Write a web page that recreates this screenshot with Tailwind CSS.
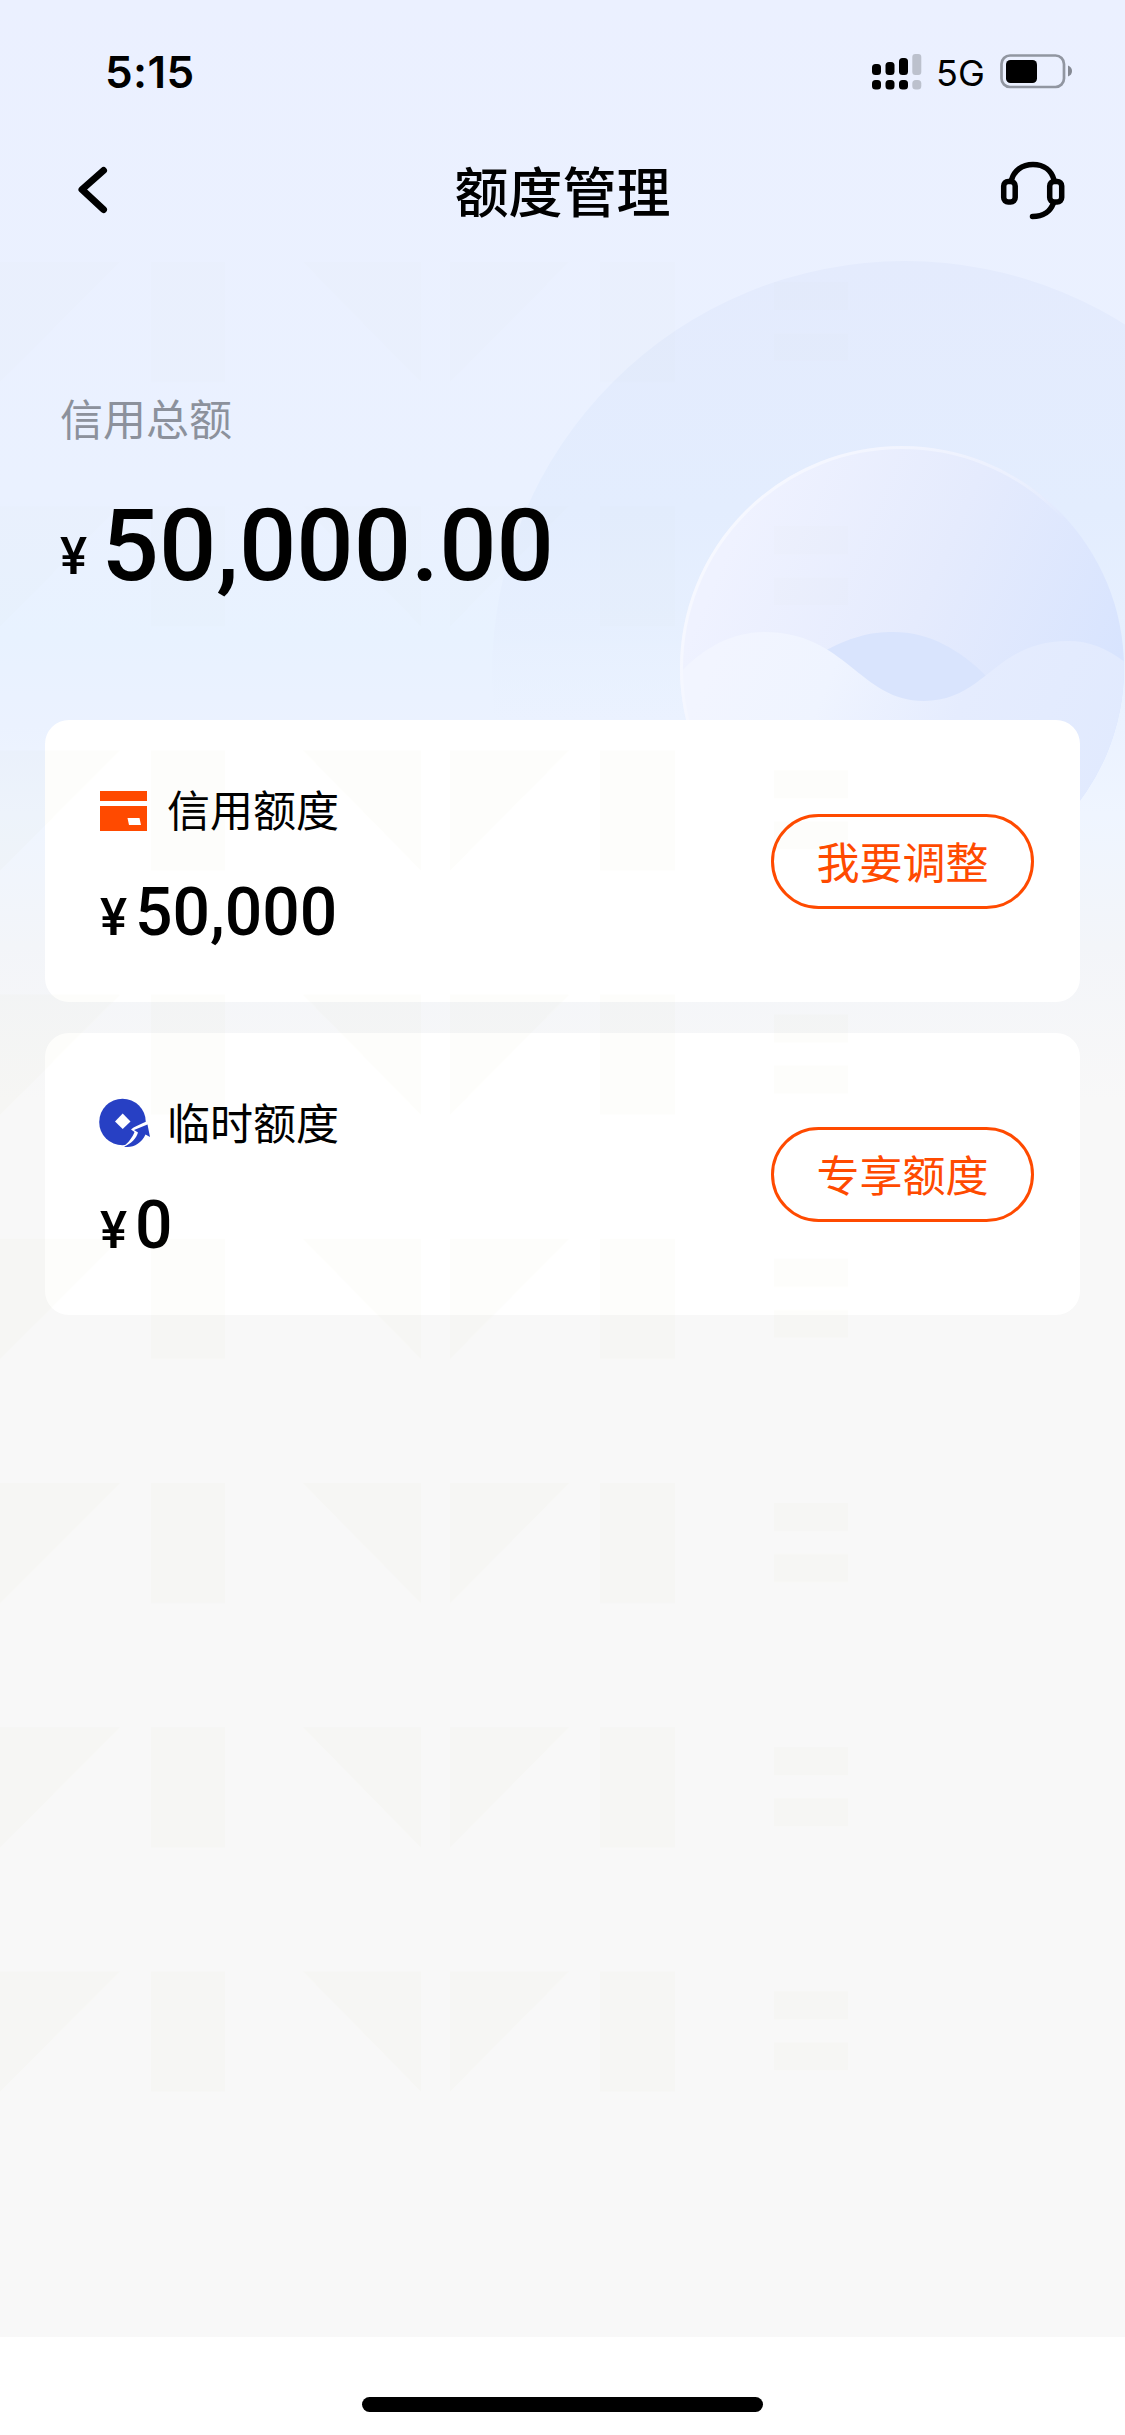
<!DOCTYPE html>
<html lang="zh-CN">
<head>
<meta charset="utf-8">
<title>额度管理</title>
<script src="https://cdn.jsdelivr.net/npm/@tailwindcss/browser@4"></script>
</head>
<body class="bg-white">
<div class="relative flex h-[2435px] w-[1125px] flex-col overflow-hidden bg-[#f8f8f8] font-['Noto_Sans_CJK_SC',sans-serif] whitespace-nowrap text-black">
  <!-- header artwork -->
  <svg class="absolute top-0 left-0" width="1125" height="1100" viewBox="0 0 1125 1100" fill="none" aria-hidden="true">
    <defs>
      <linearGradient id="sky" x1="0" y1="0" x2="0" y2="1100" gradientUnits="userSpaceOnUse">
        <stop offset="0" stop-color="#ebf0ff"/><stop offset=".45" stop-color="#eaf1ff"/><stop offset=".58" stop-color="#e8f2ff"/><stop offset=".66" stop-color="#ebf2ff"/><stop offset=".74" stop-color="#eff5ff"/><stop offset=".86" stop-color="#f3f5f9"/><stop offset="1" stop-color="#f8f8f8"/>
      </linearGradient>
      <linearGradient id="halo" x1="0" y1="261" x2="0" y2="760" gradientUnits="userSpaceOnUse">
        <stop offset="0" stop-color="#e4ebfd"/><stop offset=".5" stop-color="#e3edfe"/><stop offset=".75" stop-color="#e6effe" stop-opacity=".8"/><stop offset="1" stop-color="#ecf3ff" stop-opacity="0"/>
      </linearGradient>
      <linearGradient id="ball" x1="740" y1="520" x2="1110" y2="680" gradientUnits="userSpaceOnUse">
        <stop offset="0" stop-color="#eff2ff"/><stop offset=".5" stop-color="#e5ebfd"/><stop offset="1" stop-color="#d8e4fe"/>
      </linearGradient>
      <linearGradient id="rim" x1="740" y1="500" x2="1000" y2="640" gradientUnits="userSpaceOnUse">
        <stop offset="0" stop-color="#f6f8ff"/><stop offset=".7" stop-color="#f2f5ff" stop-opacity=".6"/><stop offset="1" stop-color="#fff" stop-opacity="0"/>
      </linearGradient>
      <linearGradient id="wave" x1="720" y1="640" x2="1100" y2="800" gradientUnits="userSpaceOnUse">
        <stop offset="0" stop-color="#f2f5ff"/><stop offset=".28" stop-color="#eff4ff"/><stop offset=".6" stop-color="#e5ecfe"/><stop offset="1" stop-color="#e1eafe"/>
      </linearGradient>
      <clipPath id="disc"><circle cx="902" cy="668" r="222"/></clipPath>
    </defs>
    <path fill="url(#sky)" d="M0 0h1125v1100H0z"/>
    <circle cx="905" cy="674" r="413" fill="url(#halo)"/>
    <circle cx="902" cy="668" r="222" fill="url(#ball)"/>
    <g clip-path="url(#disc)">
      <path d="M823 652C850 637 870 632 893 632C930 632 960 650 987 677L960 720H850Z" fill="#d9e4fd"/>
      <path d="M676 677C700 650 730 632 764 632C846 632 860 701 924 701C986 701 994 641 1068 641C1090 641 1108 649 1126 663V900H676Z" fill="url(#wave)"/>
    </g>
    <circle cx="902" cy="668" r="220.500" stroke="url(#rim)" stroke-width="3"/>
  </svg>

  <!-- status bar -->
  <div class="relative flex h-[132px] shrink-0 items-start justify-between pr-[52px] pl-[105px]">
    <span class="mt-[46px] font-['Inter',sans-serif] text-[44px] leading-[52px] font-semibold tracking-[0.4px]">5:15</span>
    <div class="mt-[50px] flex items-center">
      <svg width="50" height="44" viewBox="0 0 50 44" aria-hidden="true">
        <rect x="0" y="14" width="9" height="11" rx="3.500"/><rect x="13.500" y="12" width="9" height="13" rx="3.500"/><rect x="27" y="8" width="9" height="17" rx="3.500"/><rect x="40.300" y="4" width="9" height="21" rx="3" fill="#bcc1cd"/>
        <rect x="0" y="30" width="9" height="9.500" rx="3.500"/><rect x="13.500" y="30" width="9" height="9.500" rx="3.500"/><rect x="27" y="30" width="9" height="9.500" rx="3.500"/><rect x="40.300" y="30" width="9" height="9.500" rx="3.500" fill="#bcc1cd"/>
      </svg>
      <span class="ml-[14px] w-[64px] pt-[2px] font-['Inter',sans-serif] text-[36px] leading-[42px]">5G</span>
      <svg width="73" height="44" viewBox="0 0 73 44" fill="none" aria-hidden="true">
        <rect x="1.500" y="5.500" width="62.500" height="31.500" rx="8.500" stroke="#9196a1" stroke-width="2.700"/><rect x="6" y="10" width="31" height="23" rx="4.500" fill="#000"/><path d="M68 15.500q4 1.500 4 5.500t-4 5.500z" fill="#858993"/>
      </svg>
    </div>
  </div>

  <!-- navigation bar -->
  <header class="relative flex h-[115px] shrink-0 items-center justify-between pr-[58px] pl-[58px]">
    <svg width="68" height="60" viewBox="-18 -1 68 60" fill="none" stroke="#000" stroke-width="7" stroke-linecap="round" stroke-linejoin="round" aria-hidden="true"><path d="M27.500 9.500 6 28.500 27.500 48.500"/></svg>
    <h1 class="text-[54px] leading-[80px] font-medium">额度管理</h1>
    <svg width="68" height="60" viewBox="999 160 68 60" fill="none" stroke="#000" stroke-width="5.500" stroke-linecap="round" aria-hidden="true">
      <rect x="1003.700" y="181.500" width="11.500" height="20.500" rx="4.500"/><rect x="1049.700" y="181.500" width="12" height="20.500" rx="4.500"/><path d="M1011.500 180C1014 170.500 1022 164.500 1033 164.500S1051.500 170.500 1054 180M1053.500 203C1050 212 1044 216.500 1032.500 216.500"/>
    </svg>
  </header>

  <!-- total credit -->
  <section class="relative flex h-[473px] shrink-0 flex-col pl-[60px]">
    <p class="mt-[138px] text-[43px] leading-[64px] text-[#8c919c]">信用总额</p>
    <div class="mt-[37px] flex items-baseline font-['Roboto',sans-serif] font-medium">
      <span class="relative -top-[6px] w-[41.500px] text-[51px] leading-[120px]">¥</span><span class="text-[101px] leading-[120px]">50,000.00</span>
    </div>
  </section>

  <!-- limit cards -->
  <main class="relative flex flex-1 flex-col gap-[31px] px-[45px]">
    <article class="flex h-[282px] items-center justify-between rounded-[24px] bg-white pr-[46px] pl-[55px]">
      <div class="flex h-full flex-col">
        <div class="mt-[58px] flex h-[64px] items-center gap-[20px]">
          <svg width="47" height="50" viewBox="0 0 47 50" fill="#ff4a00" aria-hidden="true"><path d="M0 6h47v10H0zM0 21h47v25H0zM27.500 33l1.500 7h12l-1.500-7z" fill-rule="evenodd"/></svg>
          <h2 class="-mt-[5px] text-[43px] leading-[64px]">信用额度</h2>
        </div>
        <div class="mt-[31px] flex items-baseline font-['Roboto',sans-serif] font-medium"><span class="w-[35px] text-[51px] leading-[80px]">¥</span><span class="text-[66px] leading-[80px]">50,000</span></div>
      </div>
      <button class="flex h-[95px] w-[263px] items-center justify-center rounded-full border-3 border-[#ff4a00] pb-[3px] text-[43px] leading-[64px] text-[#ff4a00]">我要调整</button>
    </article>
    <article class="flex h-[282px] items-center justify-between rounded-[24px] bg-white pr-[46px] pl-[55px]">
      <div class="flex h-full flex-col">
        <div class="mt-[58px] flex h-[64px] items-center gap-[16px]">
          <svg class="-ml-px" width="52" height="50" viewBox="99 1097 52 50" aria-hidden="true">
            <circle cx="122.500" cy="1121" r="23.300" fill="#2740c4"/>
            <path d="M122.700 1112.500 130.500 1120.500 122.700 1128 115 1120.500Z" fill="#fff"/>
            <path d="M151 1118.500 143 1122C139 1124 134 1125.500 131 1128.500L134.500 1131C132 1137 129 1141 122 1147L150 1149Z" fill="#fff"/>
            <path d="M147.500 1123.500 150 1136 145.500 1133.500C141 1143 133 1147 124 1145.700 131 1143 136.500 1137 138 1131.500L134 1129Z" fill="#2740c4"/>
          </svg>
          <h2 class="-mt-[5px] text-[43px] leading-[64px]">临时额度</h2>
        </div>
        <div class="mt-[31px] flex items-baseline font-['Roboto',sans-serif] font-medium"><span class="w-[35px] text-[51px] leading-[80px]">¥</span><span class="text-[66px] leading-[80px]">0</span></div>
      </div>
      <button class="flex h-[95px] w-[263px] items-center justify-center rounded-full border-3 border-[#ff4a00] pb-[3px] text-[43px] leading-[64px] text-[#ff4a00]">专享额度</button>
    </article>
  </main>

  <!-- home indicator -->
  <footer class="relative flex h-[98px] shrink-0 items-start justify-center bg-white pt-[60px]"><div class="h-[15px] w-[401px] rounded-full bg-black"></div></footer>

  <!-- faint repeating pattern over the page -->
  <svg class="pointer-events-none absolute top-[262px] left-0" width="1125" height="1835" aria-hidden="true">
    <defs><pattern id="marks" width="1125" height="244.200" patternUnits="userSpaceOnUse"><path d="M0 0H120L0 120ZM151 0h74v120h-74zM303 0H421V120ZM450 0H569L450 120ZM600 0h75v120h-75zM774 20h74v28h-74zM774 71h74v28h-74z" fill="#787800" fill-opacity=".014"/></pattern></defs>
    <rect width="1125" height="480" fill="url(#marks)" opacity=".45"/>
    <rect y="480" width="1125" height="1355" fill="url(#marks)"/>
  </svg>
</div>
</body>
</html>
